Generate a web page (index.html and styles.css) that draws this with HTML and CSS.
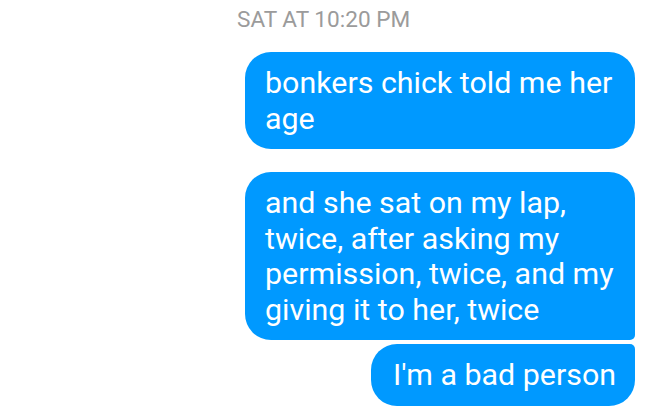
FILE: index.html
```html
<!DOCTYPE html>
<html>
<head>
<meta charset="utf-8">
<link rel="stylesheet" href="styles.css">
</head>
<body>
<div class="thread">
  <div class="stamp">SAT AT 10:20 PM</div>
  <div class="group">
    <div class="bubble single">bonkers chick told me her age</div>
  </div>
  <div class="group">
    <div class="bubble first">and she sat on my lap, twice, after asking my permission, twice, and my giving it to her, twice</div>
    <div class="bubble last">I'm a bad person</div>
  </div>
</div>
</body>
</html>
```
FILE: styles.css
```css
html, body {
  margin: 0;
  padding: 0;
  background: #ffffff;
}
body {
  font-family: Roboto, "Noto Sans", sans-serif;
}
.thread {
  width: 648px;
  height: 419px;
  overflow: hidden;
  display: flex;
  flex-direction: column;
  align-items: stretch;
  padding: 0 13px 0 0;
  box-sizing: border-box;
}
.stamp {
  flex-shrink: 0;
  color: #9b9b9b;
  font-size: 22.6px;
  line-height: 26px;
  padding-top: 7px;
  padding-left: 237px;
  height: 52px;
  box-sizing: border-box;
}
.group {
  flex-shrink: 0;
  display: flex;
  flex-direction: column;
  align-items: flex-end;
  gap: 4px;
  margin-bottom: 23px;
}
.bubble {
  background: #0099ff;
  color: #ffffff;
  font-size: 30.4px;
  line-height: 35.5px;
  padding: 13px 19px 13px 20px;
  max-width: 390px;
  box-sizing: border-box;
  border-radius: 26px;
}
.bubble.first {
  border-bottom-right-radius: 5px;
}
.bubble.last {
  padding-left: 22px;
  border-top-right-radius: 5px;
}
```
